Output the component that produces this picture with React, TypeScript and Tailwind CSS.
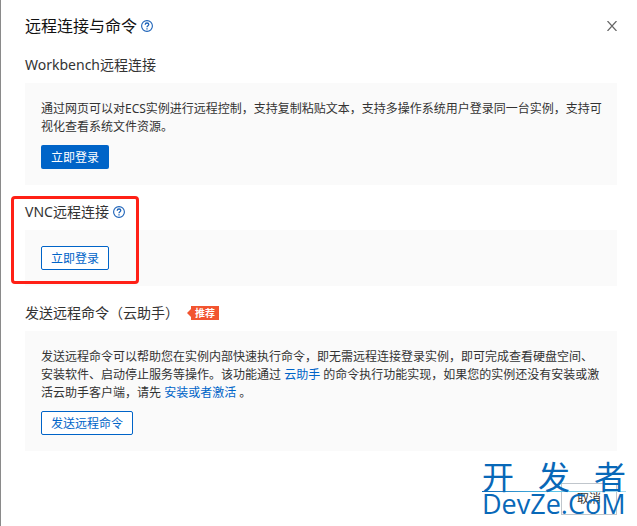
import type { ReactNode } from "react";

const outlineButton =
  "h-6 px-[9px] pt-[2px] rounded-[2px] border border-[#0064c8] bg-white text-xs text-[#0064c8] hover:bg-blue-50";

const description = "text-xs leading-[18px] pt-px mb-[9px]";

function HelpIcon() {
  return (
    <svg width="12" height="12" viewBox="0 0 12 12" fill="none" stroke="#1c62b8" aria-hidden="true">
      <circle cx="6" cy="6" r="5.4" strokeWidth="1.1" />
      <path d="M4.2 4.8C4.2 3.6 5 3 6 3s1.8.6 1.8 1.6C7.8 5.8 6 5.8 6 7.3" strokeWidth="1.3" />
      <path d="M6 8.2v1.2" strokeWidth="1.3" />
    </svg>
  );
}

function HelpButton({ label }: { label: string }) {
  return (
    <button type="button" aria-label={label} className="flex">
      <HelpIcon />
    </button>
  );
}

function Section({ title, extra, children }: { title: string; extra?: ReactNode; children: ReactNode }) {
  return (
    <section className="relative">
      <div className="flex items-center h-5 mb-2">
        <h2 className="text-sm leading-5">{title}</h2>
        {extra}
      </div>
      <div className="bg-[#fafafa] py-4 pl-4 pr-[14px]">{children}</div>
    </section>
  );
}

function Watermark() {
  return (
    <div className="absolute -right-[9px] -bottom-px w-36 text-[#0868b8] pointer-events-none">
      <div className="flex justify-between font-['Noto_Sans_CJK_SC',sans-serif] text-[32px] leading-8">
        <span>开</span>
        <span>发</span>
        <span>者</span>
      </div>
      <div className="h-px bg-linear-to-r from-[#0868b8] via-[#58c4e8] to-[#a8dcf0]" />
      <div className="font-['Open_Sans',sans-serif] text-[27px] leading-6 whitespace-nowrap">DevZe.CoM</div>
    </div>
  );
}

export default function App() {
  return (
    <div className="min-h-screen border-l border-[#8a8a8a] bg-white pl-6 pr-5 pt-[14px] font-['Noto_Sans','Noto_Sans_CJK_SC',sans-serif] text-[#333]">
      <div role="dialog" aria-labelledby="dialog-title" className="flex flex-col gap-[17px]">
        {/* Header */}
        <header className="flex items-center h-6">
          <h1 id="dialog-title" className="text-base leading-6 text-[#111] mr-1">
            远程连接与命令
          </h1>
          <HelpButton label="帮助" />
          <button type="button" aria-label="关闭" className="ml-auto text-[#666]">
            <svg width="10" height="10" viewBox="0 0 10 10" fill="none" stroke="currentColor" strokeWidth="1.2">
              <path d="M.5 0l9 10M9.5 0l-9 10" />
            </svg>
          </button>
        </header>

        {/* Workbench */}
        <Section title="Workbench远程连接">
          <p className={description}>
            通过网页可以对ECS实例进行远程控制，支持复制粘贴文本，支持多操作系统用户登录同一台实例，支持可视化查看系统文件资源。
          </p>
          <button
            type="button"
            className="block h-6 px-[10px] pt-[2px] rounded-[2px] bg-[#0064c8] text-xs text-white hover:bg-blue-700"
          >
            立即登录
          </button>
        </Section>

        {/* VNC */}
        <Section
          title="VNC远程连接"
          extra={
            <div className="ml-1">
              <HelpButton label="VNC帮助" />
            </div>
          }
        >
          <button type="button" className={`block ${outlineButton}`}>
            立即登录
          </button>
          <div className="absolute -left-[14px] -top-[6px] bottom-[2px] w-32 rounded border-3 border-[#ff2016] pointer-events-none" />
        </Section>

        {/* Remote command */}
        <Section
          title="发送远程命令（云助手）"
          extra={
            <span className="flex items-center ml-2">
              <svg width="4" height="8" viewBox="0 0 4 8" fill="#f25430" aria-hidden="true">
                <path d="M4 0v8L0 4z" />
              </svg>
              <span className="bg-[#f25430] text-white text-[10px] leading-[14px] px-1 font-bold">推荐</span>
            </span>
          }
        >
          <p className={description}>
            发送远程命令可以帮助您在实例内部快速执行命令，即无需远程连接登录实例，即可完成查看硬盘空间、安装软件、启动停止服务等操作。该功能通过{" "}
            <a href="#assistant" className="text-[#0064c8] hover:underline">
              云助手
            </a>{" "}
            的命令执行功能实现，如果您的实例还没有安装或激活云助手客户端，请先{" "}
            <a href="#install" className="text-[#0064c8] hover:underline">
              安装或者激活
            </a>{" "}
            。
          </p>
          <button type="button" className={`block ${outlineButton}`}>
            发送远程命令
          </button>
        </Section>

        {/* Footer */}
        <footer className="relative flex justify-end pt-[15px]">
          <button type="button" className="h-8 px-[15px] border border-[#c0c6cc] bg-white text-xs">
            取消
          </button>
          <Watermark />
        </footer>
      </div>
    </div>
  );
}
